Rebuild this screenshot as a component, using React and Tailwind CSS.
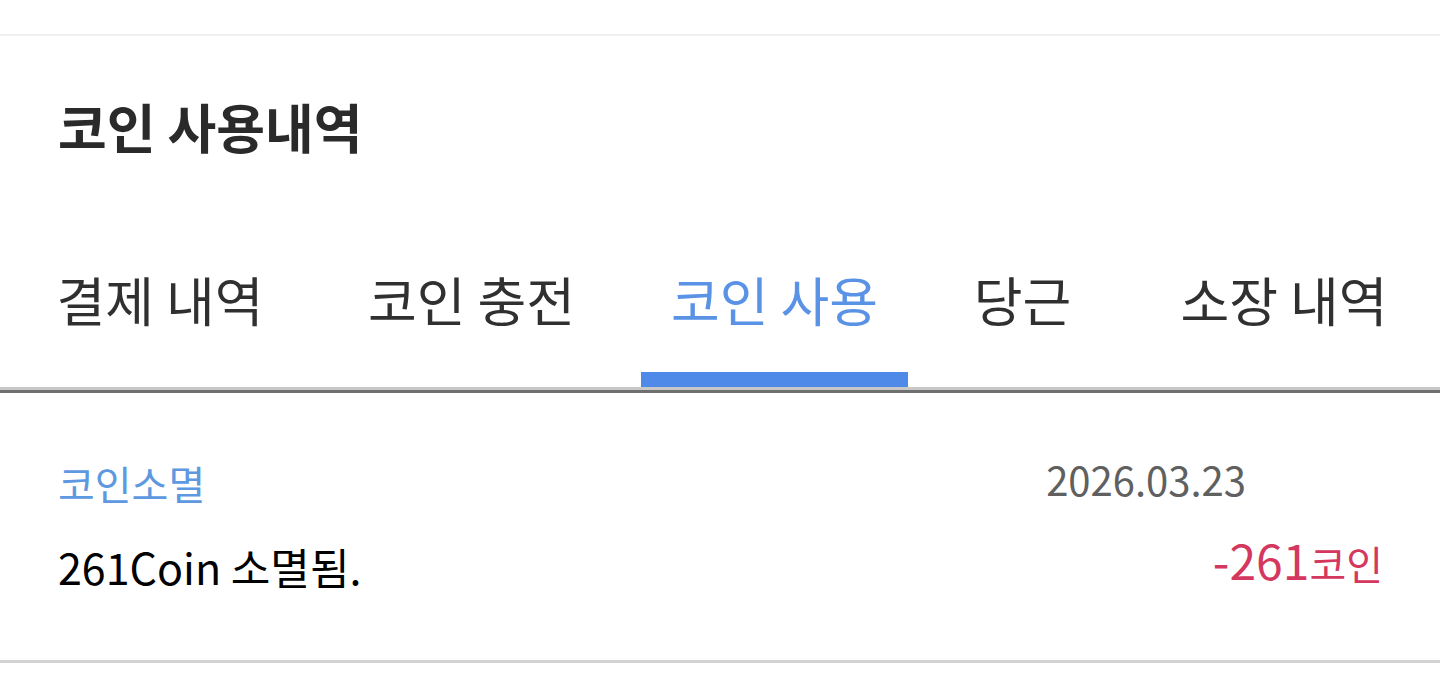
/**
 * Coin usage history screen
 * Title, tab bar, and a single usage record
 */

const tabs = [
  { label: '결제 내역', width: 'w-[284px]' },
  { label: '코인 충전', width: 'w-[267px]' },
  { label: '코인 사용', width: 'w-[267px]', active: true },
  { label: '당근', width: 'w-[157px]' },
  { label: '소장 내역', width: 'w-[294px]' },
];

export default function App() {
  return (
    <div className="w-[1440px] h-[686px] bg-white overflow-hidden font-['Noto_Sans_CJK_KR','Noto_Sans',sans-serif]">
      <div className="h-[34px]" />
      <div className="h-[2px] bg-[#efeff1]" />

      {/* Title */}
      <div className="h-[180px] flex items-center px-[58px]">
        <h1 className="text-[53px] leading-[56px] font-bold text-[#2a2a2a]">코인 사용내역</h1>
      </div>

      {/* Tabs */}
      <div className="flex gap-[36px] pl-[18px]">
        {tabs.map((tab) => (
          <div key={tab.label} className={`${tab.width} flex flex-col pt-[57px]`}>
            <div
              className={`text-center text-[53px] leading-[52px] whitespace-nowrap ${
                tab.active ? 'text-[#5a92e6]' : 'text-[#303030]'
              }`}
            >
              {tab.label}
            </div>
            <div className="h-[47px]" />
            <div className={`h-[15px] ${tab.active ? 'bg-[#4f8ae8]' : ''}`} />
          </div>
        ))}
      </div>
      <div className="h-[3px] bg-[#c8c8c8]" />
      <div className="h-[3px] bg-[#6f6f6f]" />

      {/* Record */}
      <div className="h-[270px] flex justify-between border-b-[3px] border-[#d2d2d2]">
        <div className="pl-[58px] pt-[66px]">
          <div className="text-[40px] leading-[48px] text-[#5d98e0]">코인소멸</div>
          <div className="mt-[33px] text-[43px] leading-[52px] text-black">261Coin 소멸됨.</div>
        </div>
        <div className="flex flex-col items-end pr-[57px] pt-[62px]">
          <div className="mr-[137px] text-[40px] leading-[48px] text-[#606060]">2026.03.23</div>
          <div className="mt-[30px] leading-[52px] text-[#d5385f] whitespace-nowrap">
            <span className="text-[48px]">-261</span>
            <span className="text-[40px]">코인</span>
          </div>
        </div>
      </div>
    </div>
  );
}
